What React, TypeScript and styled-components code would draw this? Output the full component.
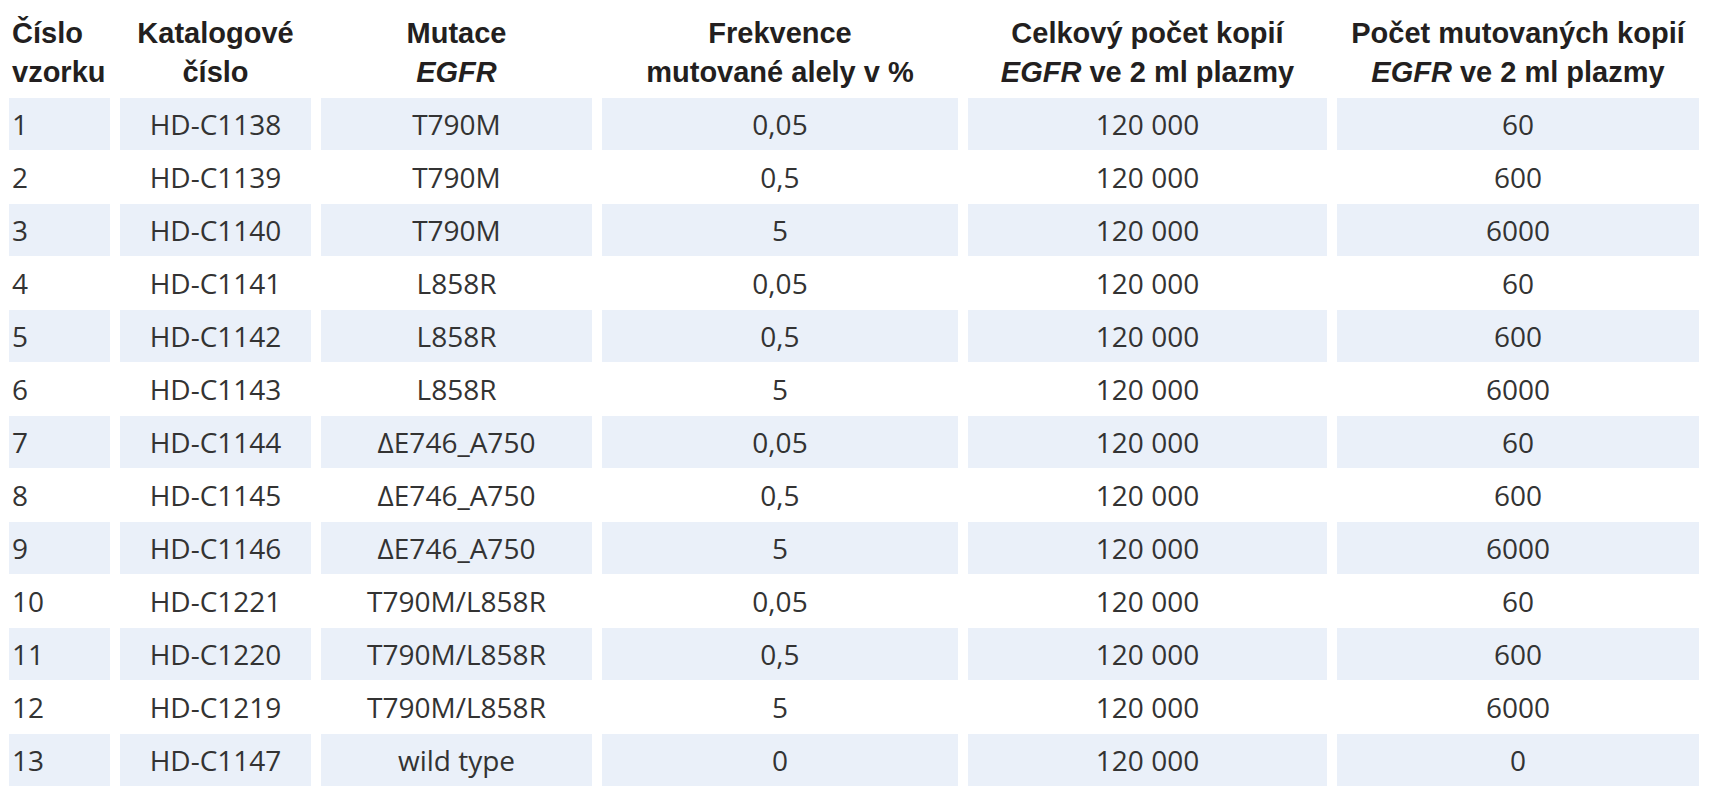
import React from "react";
import styled, { createGlobalStyle } from "styled-components";

const GlobalStyle = createGlobalStyle`
  html, body {
    margin: 0;
    padding: 0;
    background: #ffffff;
  }
  body {
    font-family: "Open Sans", "Noto Sans", sans-serif;
  }
`;

const COLUMNS = "101px 191px 271px 356px 359px 362px";

const Page = styled.div`
  width: 1711px;
  height: 800px;
  padding-left: 9px;
  box-sizing: border-box;
  background: #ffffff;
`;

const Table = styled.div`
  display: flex;
  flex-direction: column;
`;

const HeaderRow = styled.div`
  display: grid;
  grid-template-columns: ${COLUMNS};
  column-gap: 10px;
  height: 98px;
  box-sizing: border-box;
  padding-top: 14px;
  align-items: start;
`;

const HeadCell = styled.div<{ $align: "left" | "center" }>`
  font-family: "Liberation Sans", Arial, sans-serif;
  font-weight: 700;
  font-size: 29px;
  line-height: 39px;
  color: #231f20;
  text-align: ${(p) => p.$align};
  padding-left: ${(p) => (p.$align === "left" ? "3px" : "0")};
  white-space: nowrap;
`;

const Italic = styled.i`
  font-style: italic;
`;

const Row = styled.div`
  display: grid;
  grid-template-columns: ${COLUMNS};
  column-gap: 10px;
  height: 53px;
`;

const Cell = styled.div<{ $align: "left" | "center"; $shaded: boolean }>`
  display: flex;
  align-items: center;
  justify-content: ${(p) => (p.$align === "left" ? "flex-start" : "center")};
  padding-left: ${(p) => (p.$align === "left" ? "3px" : "0")};
  height: 52px;
  background: ${(p) => (p.$shaded ? "#eaf0f9" : "transparent")};
  font-family: "Open Sans", "Noto Sans", sans-serif;
  font-size: 28px;
  line-height: 1;
  color: #333333;
  white-space: nowrap;
`;

type RowData = [string, string, string, string, string, string];

const rows: RowData[] = [
  ["1", "HD-C1138", "T790M", "0,05", "120 000", "60"],
  ["2", "HD-C1139", "T790M", "0,5", "120 000", "600"],
  ["3", "HD-C1140", "T790M", "5", "120 000", "6000"],
  ["4", "HD-C1141", "L858R", "0,05", "120 000", "60"],
  ["5", "HD-C1142", "L858R", "0,5", "120 000", "600"],
  ["6", "HD-C1143", "L858R", "5", "120 000", "6000"],
  ["7", "HD-C1144", "ΔE746_A750", "0,05", "120 000", "60"],
  ["8", "HD-C1145", "ΔE746_A750", "0,5", "120 000", "600"],
  ["9", "HD-C1146", "ΔE746_A750", "5", "120 000", "6000"],
  ["10", "HD-C1221", "T790M/L858R", "0,05", "120 000", "60"],
  ["11", "HD-C1220", "T790M/L858R", "0,5", "120 000", "600"],
  ["12", "HD-C1219", "T790M/L858R", "5", "120 000", "6000"],
  ["13", "HD-C1147", "wild type", "0", "120 000", "0"],
];

export default function App() {
  return (
    <>
      <GlobalStyle />
      <Page>
        <Table>
          <HeaderRow>
            <HeadCell $align="left">
              Číslo
              <br />
              vzorku
            </HeadCell>
            <HeadCell $align="center">
              Katalogové
              <br />
              číslo
            </HeadCell>
            <HeadCell $align="center">
              Mutace
              <br />
              <Italic>EGFR</Italic>
            </HeadCell>
            <HeadCell $align="center">
              Frekvence
              <br />
              mutované alely v %
            </HeadCell>
            <HeadCell $align="center">
              Celkový počet kopií
              <br />
              <Italic>EGFR</Italic> ve 2 ml plazmy
            </HeadCell>
            <HeadCell $align="center">
              Počet mutovaných kopií
              <br />
              <Italic>EGFR</Italic> ve 2 ml plazmy
            </HeadCell>
          </HeaderRow>
          {rows.map((r, i) => (
            <Row key={r[0]}>
              {r.map((v, j) => (
                <Cell key={j} $align={j === 0 ? "left" : "center"} $shaded={i % 2 === 0}>
                  {v}
                </Cell>
              ))}
            </Row>
          ))}
        </Table>
      </Page>
    </>
  );
}
